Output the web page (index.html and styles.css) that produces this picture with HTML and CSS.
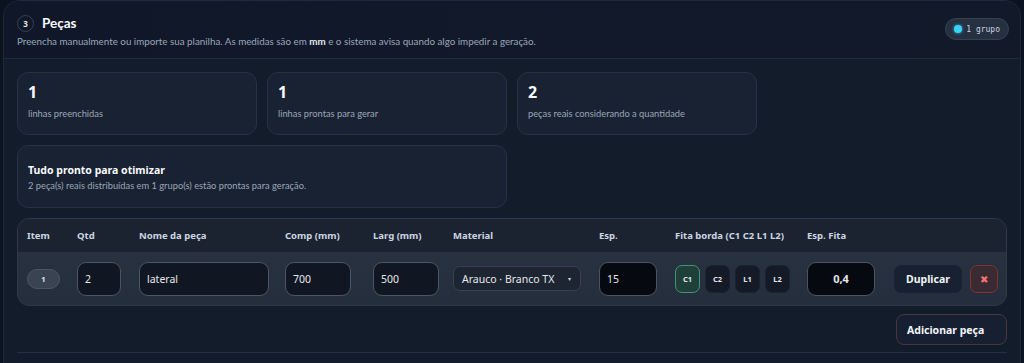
FILE: index.html
```html
<!DOCTYPE html>
<html lang="pt-BR">
<head>
<meta charset="utf-8">
<title>Peças</title>
<link rel="stylesheet" href="styles.css">
</head>
<body>
<section class="panel">
  <header class="panel-head">
    <div class="head-text">
      <div class="title-row">
        <span class="step">3</span>
        <h2 class="title">Peças</h2>
      </div>
      <p class="subtitle">Preencha manualmente ou importe sua planilha. As medidas são em <b>mm</b> e o sistema avisa quando algo impedir a geração.</p>
    </div>
    <span class="badge"><span class="dot"></span>1 grupo</span>
  </header>

  <div class="panel-body">
    <div class="stats">
      <div class="card">
        <div class="num">1</div>
        <div class="lbl">linhas preenchidas</div>
      </div>
      <div class="card">
        <div class="num">1</div>
        <div class="lbl">linhas prontas para gerar</div>
      </div>
      <div class="card">
        <div class="num">2</div>
        <div class="lbl">peças reais considerando a quantidade</div>
      </div>
      <div class="card card-wide">
        <div class="ready-title">Tudo pronto para otimizar</div>
        <div class="lbl">2 peça(s) reais distribuídas em 1 grupo(s) estão prontas para geração.</div>
      </div>
    </div>

    <div class="table">
      <div class="row head-row">
        <span>Item</span>
        <span>Qtd</span>
        <span>Nome da peça</span>
        <span>Comp (mm)</span>
        <span>Larg (mm)</span>
        <span>Material</span>
        <span>Esp.</span>
        <span>Fita borda (C1 C2 L1 L2)</span>
        <span>Esp. Fita</span>
        <span></span>
      </div>
      <div class="row body-row">
        <span class="item-pill">1</span>
        <span class="field w-qtd">2</span>
        <span class="field w-name">lateral</span>
        <span class="field w-dim">700</span>
        <span class="field w-dim">500</span>
        <span class="select">Arauco · Branco TX<span class="caret">▾</span></span>
        <span class="field w-esp dark">15</span>
        <span class="edges">
          <span class="edge on">C1</span>
          <span class="edge">C2</span>
          <span class="edge">L1</span>
          <span class="edge">L2</span>
        </span>
        <span class="field w-fita dark center">0,4</span>
        <span class="actions">
          <button class="btn-dup">Duplicar</button>
          <button class="btn-del">✖</button>
        </span>
      </div>
    </div>

    <div class="add-row">
      <button class="btn-add">Adicionar peça</button>
    </div>
    <div class="bottom-line"></div>
  </div>
</section>
</body>
</html>
```

FILE: styles.css
```css
* { box-sizing: border-box; }
html, body { margin: 0; padding: 0; }
body {
  background: #0b1220;
  font-family: "Noto Sans", "Open Sans", sans-serif;
  color: #e5e7eb;
  height: 363px;
  overflow: hidden;
}
.panel {
  margin-left: 3px;
  width: 1018px;
  height: 380px;
  border: 1px solid #1e293b;
  border-radius: 16px 16px 0 0;
  background: #131c2b;
  overflow: hidden;
}
.panel-head {
  height: 58px;
  display: flex;
  justify-content: space-between;
  align-items: flex-start;
  padding: 13px 11px 0 13px;
  background: linear-gradient(90deg, #0f1729 0%, #121a2a 100%);
  border-bottom: 1px solid #1f2a3a;
}
.title-row { display: flex; align-items: center; gap: 8px; height: 18px; }
.step {
  width: 17px; height: 17px;
  border-radius: 50%;
  border: 1px solid #374151;
  background: #111827;
  color: #e5e7eb;
  font-size: 8px;
  font-weight: 700;
  display: flex; align-items: center; justify-content: center;
}
.title {
  margin: 0;
  font-family: "Lato", "Noto Sans", sans-serif;
  font-size: 13.5px;
  font-weight: 700;
  color: #f8fafc;
  line-height: 18px;
}
.subtitle {
  margin: 2px 0 0;
  font-family: "Lato", "Noto Sans", sans-serif;
  font-size: 9.8px;
  color: #9aa7b8;
  line-height: 14px;
}
.subtitle b { color: #e5e7eb; }
.badge {
  margin-top: 4px;
  height: 22px;
  padding: 0 8px 0 8px;
  border-radius: 11px;
  background: #253041;
  border: 1px solid #374151;
  display: flex; align-items: center; gap: 4px;
  font-family: "DejaVu Sans Mono", "Liberation Mono", monospace;
  font-size: 8px;
  color: #cbd5e1;
}
.dot {
  width: 8px; height: 8px; border-radius: 50%;
  background: #38d3f5;
  box-shadow: 0 0 3px #38bdf8;
}
.panel-body {
  padding: 13px 13px 0 13px;
}
.stats {
  display: grid;
  grid-template-columns: repeat(4, 240px);
  grid-auto-rows: 63px;
  gap: 10px;
}
.card {
  background: #192232;
  border: 1px solid #273244;
  border-radius: 11px;
  padding: 8px 10px;
}
.card-wide {
  grid-column: span 2;
  padding-top: 17px;
}
.num {
  font-size: 16px;
  font-weight: 700;
  color: #f8fafc;
  line-height: 22px;
}
.lbl {
  margin-top: 4px;
  font-family: "Lato", "Noto Sans", sans-serif;
  font-size: 9.3px;
  color: #9aa7b8;
  line-height: 13px;
}
.ready-title {
  font-size: 10.5px;
  font-weight: 700;
  color: #f8fafc;
  line-height: 14px;
}
.card-wide .lbl { margin-top: 2px; }

.table {
  margin-top: 10px;
  border: 1px solid #2d3848;
  border-radius: 12px;
  overflow: hidden;
  background: #273140;
}
.row {
  display: grid;
  grid-template-columns: 50px 62px 146px 88px 80px 146px 76px 132px 87px 1fr;
  padding-left: 9px;
  align-items: center;
}
.head-row {
  height: 33px;
  background: #1b2331;
  font-size: 9.5px;
  font-weight: 700;
  color: #cbd5e1;
}
.body-row {
  height: 53px;
  background: linear-gradient(180deg, #28313f 0%, #252e3c 100%);
}
.item-pill {
  width: 33px; height: 20px;
  border-radius: 10px;
  background: #3a4351;
  border: 1px solid #4b5563;
  font-size: 7.5px;
  font-weight: 700;
  color: #e5e7eb;
  display: flex; align-items: center; justify-content: center;
}
.field {
  height: 34px;
  border-radius: 9px;
  border: 1px solid #4b5563;
  background: #111722;
  color: #e5e7eb;
  font-size: 10.5px;
  display: flex; align-items: center;
  padding-left: 7px;
}
.field.dark { background: #060a10; }
.field.center { justify-content: center; padding-left: 0; font-weight: 700; font-size: 11px; }
.w-qtd { width: 44px; }
.w-name { width: 130px; }
.w-dim { width: 66px; }
.w-esp { width: 58px; }
.w-fita { width: 68px; }
.select {
  width: 128px; height: 25px;
  border-radius: 7px;
  border: 1px solid #374151;
  background: #1d2532;
  color: #e5e7eb;
  font-size: 10.5px;
  display: flex; align-items: center; justify-content: space-between;
  padding: 0 9px 0 8px;
}
.caret { font-size: 6px; color: #cbd5e1; }
.edges { display: flex; gap: 5px; align-items: center; }
.edge {
  width: 25px; height: 28px;
  border-radius: 7px;
  background: #141b26;
  border: 1px solid #1b2330;
  color: #e5e7eb;
  font-size: 7.5px;
  font-weight: 700;
  display: flex; align-items: center; justify-content: center;
}
.edge.on {
  background: #1e4038;
  border: 1px solid #3f9479;
}
.actions { display: flex; gap: 8px; align-items: center; }
button { font-family: inherit; cursor: pointer; }
.btn-dup {
  width: 68px; height: 28px;
  border-radius: 7px;
  border: 1px solid #1a2333;
  background: #182131;
  color: #f1f5f9;
  font-size: 10.5px;
  font-weight: 700;
  padding: 0;
}
.btn-del {
  width: 28px; height: 28px;
  border-radius: 7px;
  border: 1px solid #7f3434;
  background: #3a2a32;
  color: #f87171;
  font-size: 10px;
  padding: 0;
}
.add-row {
  display: flex;
  justify-content: flex-end;
  margin-top: 8px;
}
.btn-add {
  width: 111px; height: 31px;
  border-radius: 8px;
  border: 1px solid #4a3838;
  background: #172033;
  color: #f1f5f9;
  font-size: 10.5px;
  font-weight: 700;
  padding: 0 0 0 10px;
  text-align: left;
}
.bottom-line {
  margin-top: 7px;
  height: 1px;
  background: #253042;
}
```
